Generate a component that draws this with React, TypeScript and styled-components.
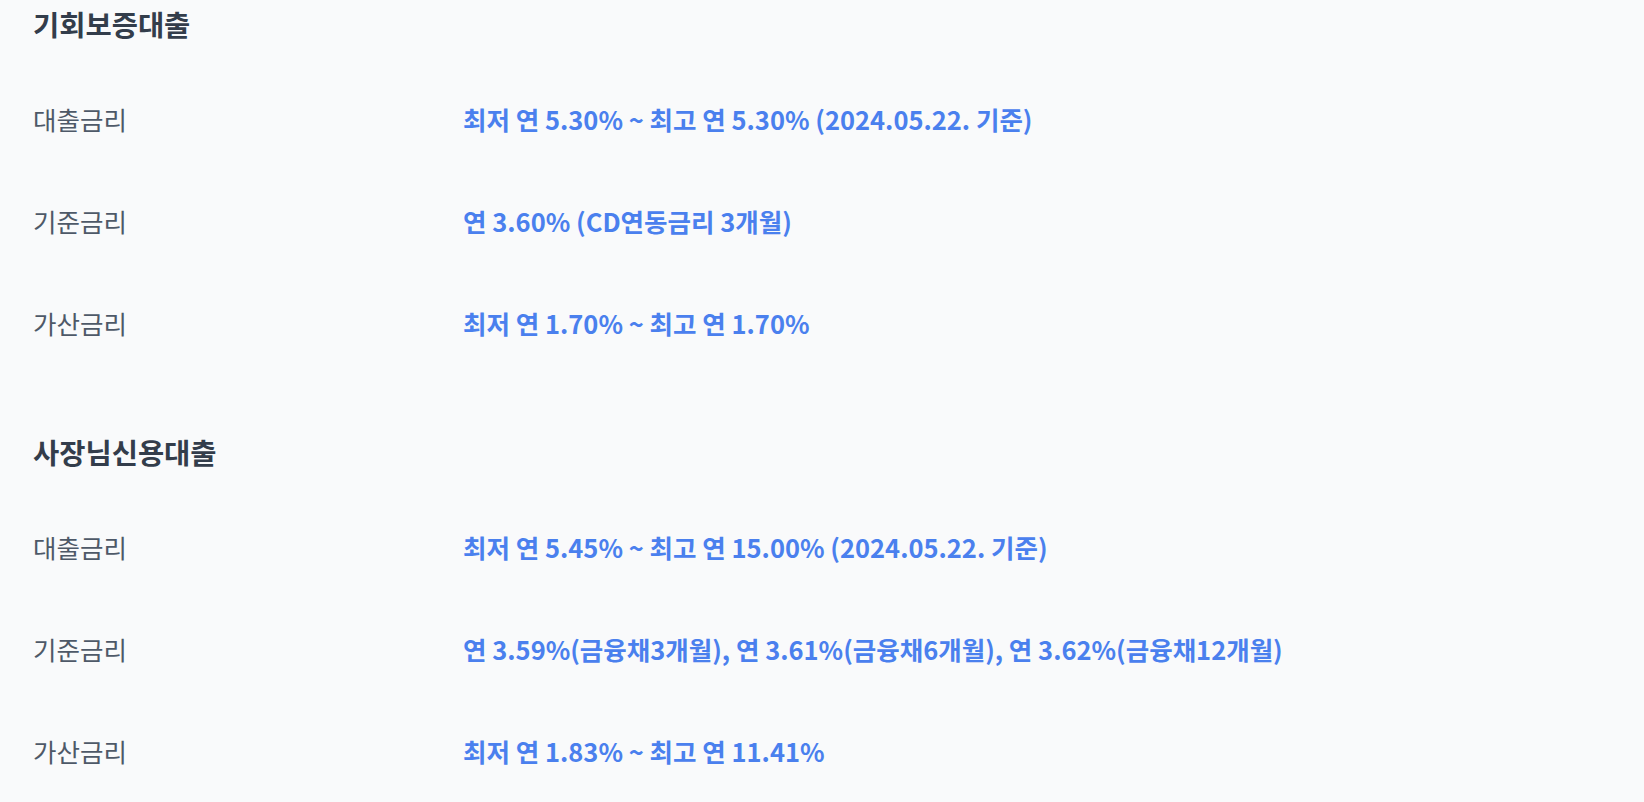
import React from "react";
import styled, { createGlobalStyle } from "styled-components";

const GlobalStyle = createGlobalStyle`
  html, body {
    margin: 0;
    padding: 0;
    background: #f9fafb;
  }
  body {
    font-family: "Noto Sans CJK KR", "Noto Sans", sans-serif;
  }
`;

const Page = styled.div`
  padding: 0 33px;
  background: #f9fafb;
  min-height: 802px;
`;

const Section = styled.section`
  & + & {
    margin-top: 54px;
  }
`;

const SectionTitle = styled.h2`
  margin: 0 0 20px;
  height: 48px;
  line-height: 48px;
  font-size: 28.5px;
  font-weight: 700;
  color: #333d4b;
`;

const RateList = styled.dl`
  margin: 0;
`;

const RateRow = styled.div`
  display: grid;
  grid-template-columns: 430px 1fr;
  align-items: center;
  height: 102px;
`;

const Label = styled.dt`
  margin: 0;
  font-size: 25.5px;
  font-weight: 400;
  color: #4e5968;
  line-height: 34px;
`;

const Value = styled.dd`
  margin: 0;
  font-size: 25.5px;
  font-weight: 600;
  color: #4a80ee;
  line-height: 34px;
`;

type Rate = { label: string; value: string };
type Loan = { title: string; rates: Rate[] };

const loans: Loan[] = [
  {
    title: "기회보증대출",
    rates: [
      { label: "대출금리", value: "최저 연 5.30% ~ 최고 연 5.30% (2024.05.22. 기준)" },
      { label: "기준금리", value: "연 3.60% (CD연동금리 3개월)" },
      { label: "가산금리", value: "최저 연 1.70% ~ 최고 연 1.70%" },
    ],
  },
  {
    title: "사장님신용대출",
    rates: [
      { label: "대출금리", value: "최저 연 5.45% ~ 최고 연 15.00% (2024.05.22. 기준)" },
      {
        label: "기준금리",
        value: "연 3.59%(금융채3개월), 연 3.61%(금융채6개월), 연 3.62%(금융채12개월)",
      },
      { label: "가산금리", value: "최저 연 1.83% ~ 최고 연 11.41%" },
    ],
  },
];

export default function App() {
  return (
    <>
      <GlobalStyle />
      <Page>
        {loans.map((loan) => (
          <Section key={loan.title}>
            <SectionTitle>{loan.title}</SectionTitle>
            <RateList>
              {loan.rates.map((r) => (
                <RateRow key={r.label}>
                  <Label>{r.label}</Label>
                  <Value>{r.value}</Value>
                </RateRow>
              ))}
            </RateList>
          </Section>
        ))}
      </Page>
    </>
  );
}
